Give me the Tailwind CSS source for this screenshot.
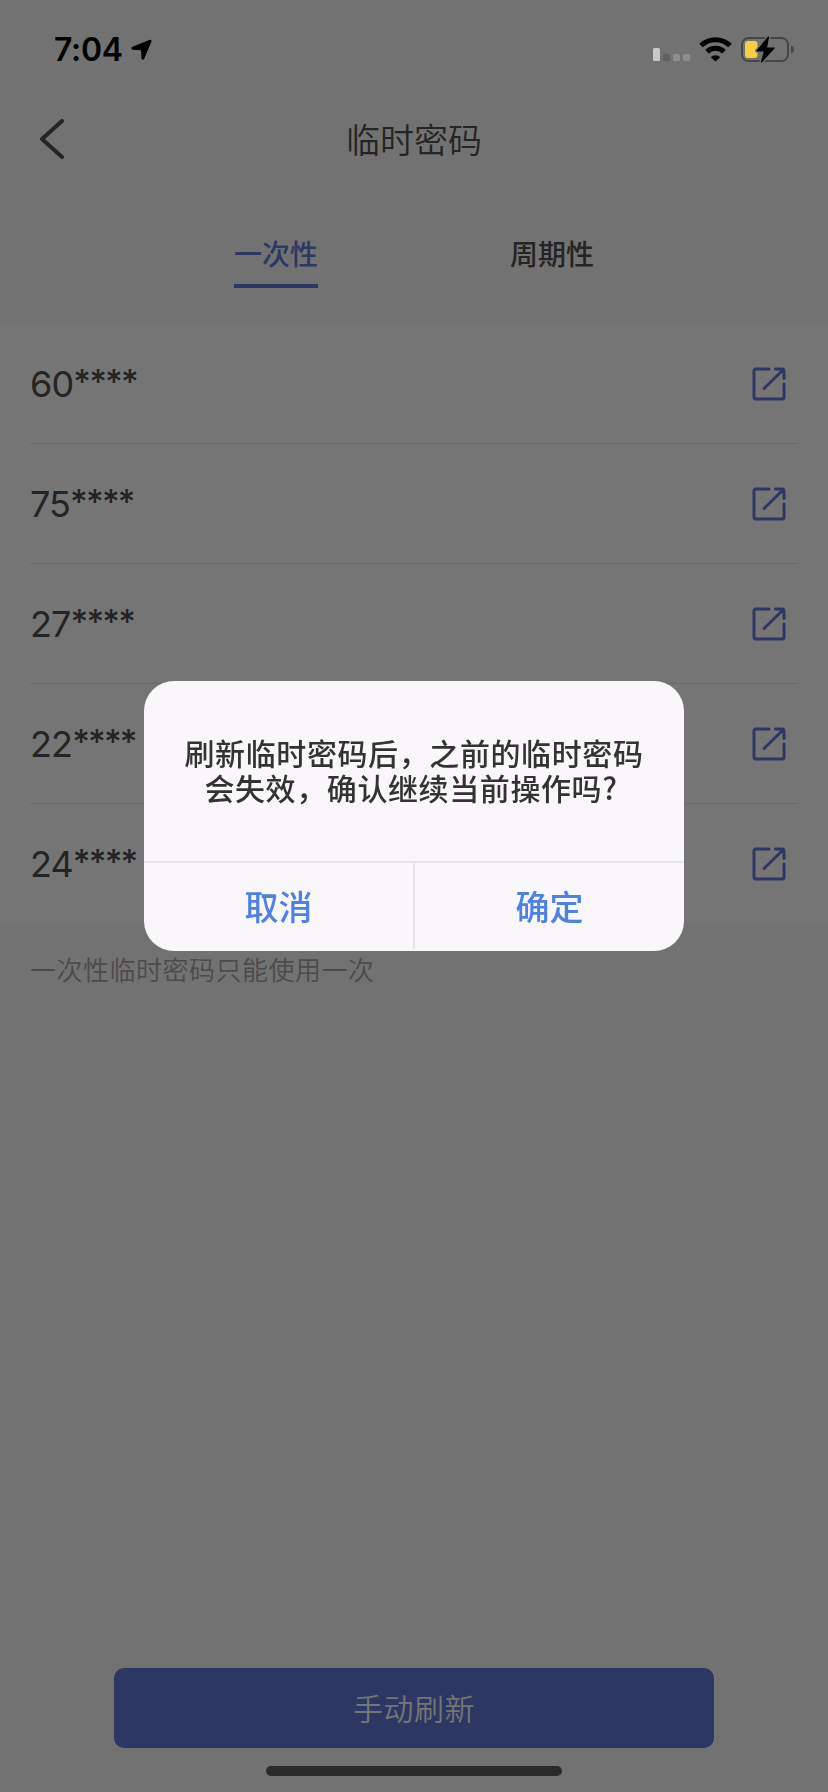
<!DOCTYPE html>
<html lang="zh-CN">
<head>
<meta charset="utf-8">
<title>临时密码</title>
<script src="https://cdn.jsdelivr.net/npm/@tailwindcss/browser@4"></script>
</head>
<body class="font-['Noto_Sans_CJK_SC',sans-serif] bg-[#727272] text-[#242424]">
<div class="w-[828px] h-[1792px] flex flex-col overflow-hidden">
  <!-- status bar -->
  <header class="h-[88px] shrink-0 flex items-start justify-between pl-[54px] pr-[34px]">
    <div class="flex items-start pt-[33px] text-black">
      <span class="w-[70px] font-['Inter',sans-serif] text-[32px] leading-[34px] font-semibold whitespace-nowrap tracking-[-0.3px]">7:04</span>
      <svg class="ml-[7px] mt-[6px]" width="21" height="22" viewBox="0 0 21 22"><path d="M1.500 7.800 18.200.9Q21 .2 20.300 3L13.300 19.600Q12 22 10.400 19.600L10 11.200 1.500 10.700Q-.8 9.300 1.500 7.800Z" fill="#000"/></svg>
    </div>
    <svg class="mt-[32px]" width="142" height="36" viewBox="652 32 142 36">
      <rect x="653" y="48" width="7" height="13" rx="1.500" fill="#c9c9c9"/>
      <rect x="663" y="54" width="7" height="7" rx="1.500" fill="#606060"/>
      <rect x="673" y="54" width="7" height="7" rx="1.500" fill="#8e8e8e"/>
      <rect x="683" y="54" width="7" height="7" rx="1.500" fill="#8e8e8e"/>
      <g fill="none" stroke="#000" stroke-width="5">
        <path d="M701 45.500a21 21 0 0 1 29 0"/>
        <path d="M707 51.800a12.200 12.200 0 0 1 17 0"/>
      </g>
      <path d="M710.800 57.300a6.600 6.600 0 0 1 9.400 0L715.500 61.500Z" fill="#000"/>
      <rect x="742" y="38" width="46" height="23" rx="6.500" fill="none" stroke="#454545" stroke-width="2"/>
      <path d="M791 45.500q3 1 3 4t-3 4Z" fill="#454545"/>
      <rect x="745" y="41" width="12.500" height="17" rx="3" fill="#f8ce46"/>
      <path d="M768.500 37 757 50.800h7.500L761.500 62 774 48h-7.600Z" fill="#000" stroke="#727272" stroke-width="4" stroke-linejoin="round"/>
      <path d="M768.500 37 757 50.800h7.500L761.500 62 774 48h-7.600Z" fill="#000" stroke="#000" stroke-width="1.200" stroke-linejoin="round"/>
    </svg>
  </header>

  <!-- navigation bar -->
  <nav class="h-[104px] shrink-0 grid grid-cols-[1fr_auto_1fr] items-center px-10">
    <svg class="mb-0.5" width="24" height="40" viewBox="0 0 24 40"><path d="M22 2 2 20 22 38" fill="none" stroke="#242424" stroke-width="4" stroke-linecap="round" stroke-linejoin="round"/></svg>
    <h1 class="pb-0.5 text-[34px] leading-[48px] font-[350]">临时密码</h1>
  </nav>

  <!-- tabs -->
  <div class="h-[132px] shrink-0 flex justify-center gap-48 pt-[41px]">
    <div class="h-[55px] border-b-4 border-[#2c3863] text-[#2c3863] text-[28px] leading-[40px] font-medium">一次性</div>
    <div class="text-[28px] leading-[40px] font-medium">周期性</div>
  </div>

  <!-- password list -->
  <svg class="hidden"><symbol id="share" viewBox="0 0 34 34"><g fill="none" stroke="#2c3863" stroke-width="3" stroke-linecap="round" stroke-linejoin="round"><path d="M17 2H4Q2 2 2 4V30Q2 32 4 32H30Q32 32 32 30V17M23.500 2H30Q32 2 32 4V11.500M31 3 12 21.500"/></g></symbol></svg>
  <main class="shrink-0 bg-[#757575] px-[30px] font-['Inter',sans-serif] text-[36px] tracking-[-0.9px]">
    <div class="h-[120px] flex items-center justify-between border-b border-[#696969] pr-3"><span>60<span class="align-[3px] text-[34px] leading-5 font-medium tracking-[-1.8px]">****</span></span><svg width="34" height="34"><use href="#share"/></svg></div>
    <div class="h-[120px] flex items-center justify-between border-b border-[#696969] pr-3"><span>75<span class="align-[3px] text-[34px] leading-5 font-medium tracking-[-1.8px]">****</span></span><svg width="34" height="34"><use href="#share"/></svg></div>
    <div class="h-[120px] flex items-center justify-between border-b border-[#696969] pr-3"><span>27<span class="align-[3px] text-[34px] leading-5 font-medium tracking-[-1.8px]">****</span></span><svg width="34" height="34"><use href="#share"/></svg></div>
    <div class="h-[120px] flex items-center justify-between border-b border-[#696969] pr-3"><span>22<span class="align-[3px] text-[34px] leading-5 font-medium tracking-[-1.8px]">****</span></span><svg width="34" height="34"><use href="#share"/></svg></div>
    <div class="h-[120px] flex items-center justify-between pr-3"><span>24<span class="align-[3px] text-[34px] leading-5 font-medium tracking-[-1.8px]">****</span></span><svg width="34" height="34"><use href="#share"/></svg></div>
  </main>
  <p class="px-[30px] pt-[25px] text-[26px] leading-[40px] tracking-[0.5px] font-[350] text-[#4b4b4b]">一次性临时密码只能使用一次</p>

  <button class="mt-auto mx-auto w-[600px] h-20 shrink-0 rounded-[10px] bg-[#2c3863] text-[#757575] text-[30px] tracking-[0.5px] font-[350] pb-0.5">手动刷新</button>
  <div class="mt-[18px] mb-4 mx-auto w-[296px] h-2.5 shrink-0 rounded-full bg-[#2a2a2a]"></div>
</div>

<!-- confirm dialog -->
<div class="fixed inset-0 flex items-start justify-center pt-[681px]">
  <div class="w-[540px] h-[270px] rounded-[30px] bg-[#f9f7f9] overflow-hidden flex flex-col">
    <p class="h-[180px] shrink-0 pt-[54px] text-center text-[30px] leading-[35px] tracking-[0.6px] font-medium text-[#333]">刷新临时密码后，之前的临时密码<span class="block pr-1.5">会失效，确认继续当前操作吗?</span></p>
    <div class="flex-1 flex border-t-2 border-[#e5e4e6] pb-0.5 text-[34px] font-medium text-[#4f80e3]">
      <button class="flex-1 pb-0.5 border-r-2 border-[#e5e4e6]">取消</button>
      <button class="flex-1 pb-0.5">确定</button>
    </div>
  </div>
</div>
</body>
</html>
